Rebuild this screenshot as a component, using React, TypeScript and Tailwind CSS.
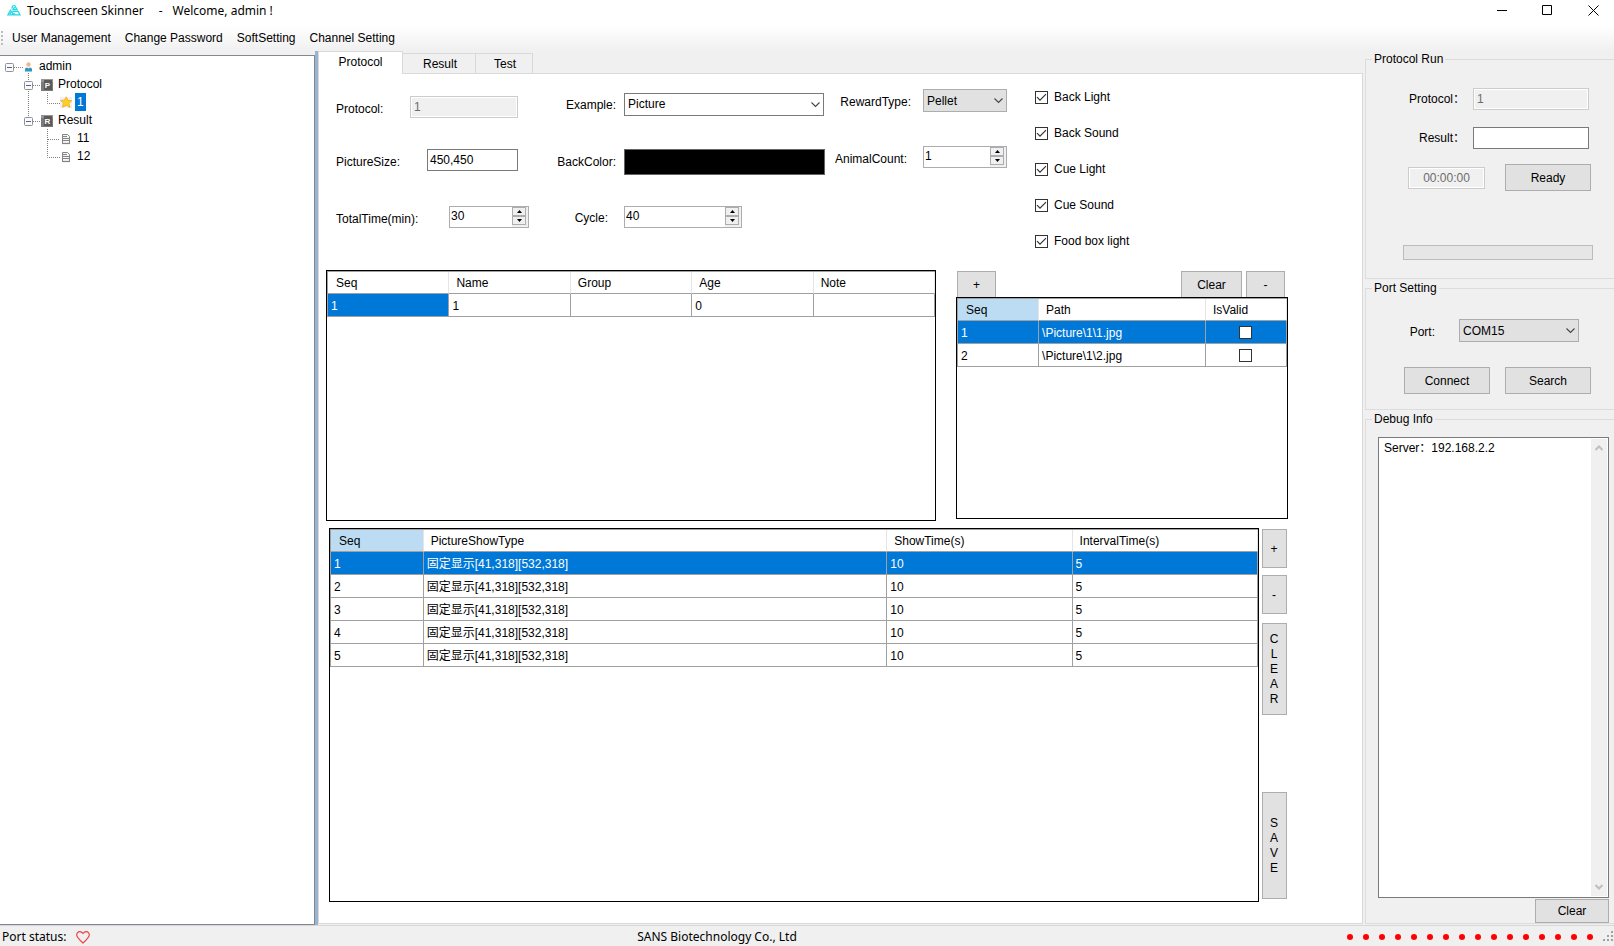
import React, { useState } from "react";
import type { ReactNode } from "react";

const button =
  "flex items-center justify-center border border-[#adadad] bg-[#e1e1e1] text-black hover:border-[#0078d7] hover:bg-[#e5f1fb]";
const disabledBox =
  "h-[22px] border border-[#cccccc] bg-[#f0f0f0] px-[3px] text-[#6d6d6d] shadow-[inset_0_0_0_1px_#ffffff]";
const textBox = "h-[22px] border border-[#7a7a7a] bg-white px-[2px]";

function Chevron() {
  return (
    <svg
      className="pointer-events-none absolute top-0 right-1 h-full w-[9px]"
      viewBox="0 0 9 5"
      fill="none"
      stroke="#444"
      strokeWidth="1.1"
    >
      <path d="M0.5 0.5 4.5 4.5 8.5 0.5" />
    </svg>
  );
}

function Combo({ id, value, tone, width }: { id: string; value: string; tone: "white" | "gray"; width: string }) {
  return (
    <div className={`relative h-[23px] ${width}`}>
      <select
        id={id}
        className={`h-full w-full appearance-none border pl-[3px] ${
          tone === "white" ? "border-[#7a7a7a] bg-white pb-[2px]" : "border-[#adadad] bg-[#e1e1e1]"
        }`}
      >
        <option>{value}</option>
      </select>
      <Chevron />
    </div>
  );
}

function Spinner({ id, initial, width }: { id: string; initial: number; width: string }) {
  const [value, setValue] = useState(initial);
  const step =
    "flex h-[9px] w-[14px] items-center justify-center border border-[#adadad] bg-[#f0f0f0]";
  return (
    <div className={`flex h-[22px] border border-[#abadb3] bg-white ${width}`}>
      <input
        id={id}
        type="number"
        value={value}
        onChange={(e) => setValue(Number(e.target.value))}
        className="min-w-0 flex-1 [appearance:textfield] bg-transparent pb-[2px] pl-px outline-none [&::-webkit-inner-spin-button]:appearance-none"
      />
      <div className="flex flex-col items-center bg-[#f0f0f0] pr-[2px]">
        <button type="button" aria-label="Increase" className={step} onClick={() => setValue(value + 1)}>
          <svg width="5" height="3" viewBox="0 0 5 3">
            <path d="M0 3 2.5 0 5 3Z" />
          </svg>
        </button>
        <button type="button" aria-label="Decrease" className={step} onClick={() => setValue(value - 1)}>
          <svg width="5" height="3" viewBox="0 0 5 3">
            <path d="M0 0 2.5 3 5 0Z" />
          </svg>
        </button>
      </div>
    </div>
  );
}

function Check({ label, initial }: { label: ReactNode; initial: boolean }) {
  const [on, setOn] = useState(initial);
  return (
    <label className="flex items-center gap-[6px] leading-4">
      <span className="grid">
        <input
          type="checkbox"
          checked={on}
          onChange={() => setOn(!on)}
          className="col-start-1 row-start-1 size-[13px] appearance-none border border-[#333] bg-white"
        />
        {on && (
          <svg
            className="pointer-events-none col-start-1 row-start-1"
            width="13"
            height="13"
            viewBox="0 0 13 13"
            fill="none"
            stroke="#333"
            strokeWidth="1.2"
          >
            <path d="M2 6.200 5 9.200 11 3.200" />
          </svg>
        )}
      </span>
      {label}
    </label>
  );
}

interface Column {
  title: string;
  width: string;
}

function DataGrid({
  columns,
  rows,
  selection,
  markFirst,
  className,
}: {
  columns: Column[];
  rows: ReactNode[][];
  selection: "cell" | "row";
  markFirst: boolean;
  className: string;
}) {
  return (
    <div className={`border border-black bg-white ${className}`}>
      <table className="w-full table-fixed border-separate border-spacing-0 border-t border-l border-[#a0a0a0]">
        <thead>
          <tr className="h-[22px]">
            {columns.map((c, i) => (
              <th
                key={c.title}
                className={`border-r border-b border-r-[#e5e5e5] border-b-[#a0a0a0] pt-px text-left leading-4 font-normal ${c.width} ${
                  i === 0 ? "pl-2" : "pl-[7px]"
                } ${markFirst && i === 0 ? "bg-[#bcdcf4]" : ""}`}
              >
                {c.title}
              </th>
            ))}
          </tr>
        </thead>
        <tbody>
          {rows.map((cells, r) => (
            <tr key={r} className="h-[23px]">
              {cells.map((cell, i) => (
                <td
                  key={i}
                  className={`border-r border-b border-[#a0a0a0] pt-[2px] pl-[3px] leading-4 whitespace-nowrap ${
                    r === 0 && (selection === "row" || i === 0) ? "bg-[#0078d7] text-white" : ""
                  }`}
                >
                  {cell}
                </td>
              ))}
            </tr>
          ))}
        </tbody>
      </table>
    </div>
  );
}

function Expander({ x }: { x: number }) {
  return (
    <g>
      <rect x={x + 0.5} y="6.5" width="8" height="8" rx="1" fill="#fafafa" stroke="#919191" />
      <path d={`M${x + 2} 10.5h5`} stroke="#4b63a7" />
    </g>
  );
}

const dots = { stroke: "#808080", strokeDasharray: "1 1" };

function LetterIcon({ letter }: { letter: string }) {
  return (
    <g>
      <rect x="41" y="4" width="12" height="12" fill="#7a7a7a" />
      <rect x="41" y="4" width="12" height="3" fill="#959595" />
      <rect x="44" y="5" width="8" height="10" fill="#5a5a5a" />
      <text x="47.5" y="13" fontSize="8" fontWeight="bold" textAnchor="middle" fill="#fff">
        {letter}
      </text>
    </g>
  );
}

function PageIcon() {
  return (
    <g fill="none" stroke="#858585">
      <path d="M62.500 5.500h5l2 2v7h-7z" fill="#f4f4f4" />
      <path d="M62 7.500h5M62 9.500h7M62 11.500h7" />
      <path d="M62 14.500h8" strokeWidth="1.200" />
    </g>
  );
}

function TreeRow({ width, text, selected, children }: { width: string; text: string; selected?: boolean; children: ReactNode }) {
  return (
    <li className="flex h-[18px] items-center">
      <svg className={`h-[18px] shrink-0 ${width}`}>{children}</svg>
      <span className={`px-[2px] leading-[18px] ${selected ? "bg-[#0078d7] text-white" : ""}`}>{text}</span>
    </li>
  );
}

function Tree() {
  return (
    <nav className="mt-1 w-[315px] shrink-0 border-t border-r border-b border-[#828790] bg-white pt-px">
      <ul>
        <TreeRow width="w-[37px]" text="admin">
          <path d="M14 10.500h9M28.500 16v2" {...dots} />
          <Expander x={5} />
          <circle cx="28.500" cy="7.500" r="2.200" fill="#efb98a" />
          <path d="M25 14.500v-2q0-2 2-2l1.500 1 1.500-1q2 0 2 2v2z" fill="#2f93c4" />
        </TreeRow>
        <TreeRow width="w-[56px]" text="Protocol">
          <path d="M28.500 0v18M33 10.500h8" {...dots} />
          <Expander x={24} />
          <LetterIcon letter="P" />
        </TreeRow>
        <TreeRow width="w-[75px]" text="1" selected>
          <path d="M28.500 0v18M47.500 0v10.500h13" fill="none" {...dots} />
          <rect x="60" y="4" width="12" height="11" fill="#f0f0f0" />
          <path
            d="m66.200 3.800 1.700 3.500 4 .4-3 2.700 1.200 4.100-3.700-2.100-3.900 1.900.9-4.200-2.900-2.700 4.100-.3z"
            fill="#ffcf1f"
            stroke="#eba62a"
            strokeWidth=".7"
          />
        </TreeRow>
        <TreeRow width="w-[56px]" text="Result">
          <path d="M28.500 0v8M33 10.500h8" {...dots} />
          <Expander x={24} />
          <LetterIcon letter="R" />
        </TreeRow>
        <TreeRow width="w-[75px]" text="11">
          <path d="M47.500 0v18M48 10.500h12" {...dots} />
          <PageIcon />
        </TreeRow>
        <TreeRow width="w-[75px]" text="12">
          <path d="M47.500 0v10.500h13" fill="none" {...dots} />
          <PageIcon />
        </TreeRow>
      </ul>
    </nav>
  );
}

function ProtocolForm() {
  return (
    <form className="flex pb-[21px] pl-[17px]" onSubmit={(e) => e.preventDefault()}>
      <div className="flex w-[193px] flex-col pt-[22px]">
        <div className="flex items-end justify-between pr-[11px]">
          <label htmlFor="protocol" className="leading-[18px]">Protocol:</label>
          <input id="protocol" disabled defaultValue="1" className={`w-[108px] ${disabledBox}`} />
        </div>
        <div className="mt-[31px] flex items-end justify-between pr-[11px]">
          <label htmlFor="size" className="leading-[18px]">PictureSize:</label>
          <input id="size" defaultValue="450,450" className={`w-[91px] ${textBox}`} />
        </div>
        <div className="mt-[35px] flex items-end justify-between">
          <label htmlFor="total" className="leading-[18px]">TotalTime(min):</label>
          <Spinner id="total" initial={30} width="w-[80px]" />
        </div>
      </div>

      <div className="ml-[27px] flex w-[269px] flex-col pt-[19px]">
        <div className="flex items-center gap-2">
          <label htmlFor="example" className="w-[60px] text-right leading-5">Example:</label>
          <Combo id="example" value="Picture" tone="white" width="w-[200px]" />
        </div>
        <div className="mt-[33px] flex items-center gap-2">
          <label htmlFor="color" className="w-[60px] text-right leading-5">BackColor:</label>
          <button id="color" type="button" aria-label="BackColor" className="h-[26px] w-[201px] border border-[#646464] bg-black" />
        </div>
        <div className="mt-[31px] flex items-end gap-2">
          <label htmlFor="cycle" className="w-[60px] pr-2 text-right leading-5">Cycle:</label>
          <Spinner id="cycle" initial={40} width="w-[118px]" />
        </div>
      </div>

      <div className="ml-2 flex flex-col pt-[15px]">
        <div className="flex items-end gap-3">
          <label htmlFor="reward" className="w-[78px] text-right leading-5">RewardType:</label>
          <Combo id="reward" value="Pellet" tone="gray" width="w-[84px]" />
        </div>
        <div className="mt-[34px] flex items-end gap-3">
          <label htmlFor="animals" className="w-[78px] pr-1 text-right leading-[18px]">AnimalCount:</label>
          <Spinner id="animals" initial={1} width="w-[84px]" />
        </div>
      </div>

      <div className="ml-7 flex flex-col gap-5 pt-[15px]">
        <Check label="Back Light" initial />
        <Check label="Back Sound" initial />
        <Check label="Cue Light" initial />
        <Check label="Cue Sound" initial />
        <Check label="Food box light" initial />
      </div>
    </form>
  );
}

function Stacked({ word }: { word: string }) {
  return (
    <span className="flex flex-col items-center leading-[15px]">
      {word.split("").map((c, i) => (
        <span key={i}>{c}</span>
      ))}
    </span>
  );
}

function ValidBox({ row }: { row: number }) {
  return (
    <span className="flex justify-center pr-1 pb-[2px]">
      <input
        type="checkbox"
        aria-label={`Row ${row} valid`}
        className="size-[13px] appearance-none border border-[#333] bg-white checked:bg-[#333]"
      />
    </span>
  );
}

const shows = ["1", "2", "3", "4", "5"].map((n) => [n, "固定显示[41,318][532,318]", "10", "5"]);

function ProtocolPage() {
  return (
    <div className="mb-px flex flex-1 flex-col border-r border-b border-l border-[#d9d9d9] bg-white">
      <ProtocolForm />
      <div className="flex h-[251px] gap-5 pr-[74px] pl-[7px]">
        <DataGrid
          className="min-w-0 flex-[610]"
          selection="cell"
          markFirst={false}
          columns={["Seq", "Name", "Group", "Age", "Note"].map((title) => ({ title, width: "w-1/5" }))}
          rows={[["1", "1", "", "0", ""]]}
        />
        <div className="flex min-w-0 flex-[333] flex-col pt-px pb-[2px]">
          <div className="flex h-[26px] gap-1 pr-[3px] pl-px">
            <button type="button" className={`w-[39px] border-b-0 ${button}`}>+</button>
            <button type="button" className={`ml-auto w-[61px] border-b-0 ${button}`}>Clear</button>
            <button type="button" className={`w-[39px] border-b-0 ${button}`}>-</button>
          </div>
          <DataGrid
            className="flex-1"
            selection="row"
            markFirst
            columns={[
              { title: "Seq", width: "w-[81px]" },
              { title: "Path", width: "" },
              { title: "IsValid", width: "w-[81px]" },
            ]}
            rows={[
              ["1", "\\Picture\\1\\1.jpg", <ValidBox row={1} />],
              ["2", "\\Picture\\1\\2.jpg", <ValidBox row={2} />],
            ]}
          />
        </div>
      </div>
      <div className="mt-[7px] mb-[21px] flex flex-1 gap-[3px] pr-[75px] pl-[10px]">
        <DataGrid
          className="min-w-0 flex-1"
          selection="row"
          markFirst
          columns={[
            { title: "Seq", width: "w-[10%]" },
            { title: "PictureShowType", width: "w-[50%]" },
            { title: "ShowTime(s)", width: "w-[20%]" },
            { title: "IntervalTime(s)", width: "w-[20%]" },
          ]}
          rows={shows}
        />
        <div className="flex w-[25px] flex-col pt-px pb-[3px]">
          <button type="button" className={`h-[39px] pr-px ${button}`}>+</button>
          <button type="button" className={`mt-[7px] h-[39px] pr-px ${button}`}>-</button>
          <button type="button" className={`mt-[9px] h-[92px] pr-px ${button}`} aria-label="CLEAR">
            <Stacked word="CLEAR" />
          </button>
          <button type="button" className={`mt-auto h-[107px] pr-px ${button}`} aria-label="SAVE">
            <Stacked word="SAVE" />
          </button>
        </div>
      </div>
    </div>
  );
}

function Group({ title, className, children }: { title: string; className: string; children: ReactNode }) {
  return (
    <fieldset className={`min-w-0 border-t border-b border-l border-[#dcdcdc] ${className}`}>
      <legend className="ml-[6px] px-[2px] leading-4">{title}</legend>
      {children}
    </fieldset>
  );
}

function SidePanel() {
  return (
    <aside className="flex w-[251px] shrink-0 flex-col pl-[2px]">
      <Group title="Protocol Run" className="h-[228px]">
        <div className="flex flex-col pt-[21px]">
          <div className="flex items-center justify-end gap-2 pr-[25px]">
            <label htmlFor="run-protocol">Protocol：</label>
            <input id="run-protocol" disabled defaultValue="1" className={`w-[116px] ${disabledBox}`} />
          </div>
          <div className="mt-[17px] flex items-center justify-end gap-2 pr-[25px]">
            <label htmlFor="run-result">Result：</label>
            <input id="run-result" className={`w-[116px] ${textBox}`} />
          </div>
          <div className="mt-[15px] flex items-center justify-end gap-5 pr-[23px]">
            <input aria-label="Elapsed" disabled defaultValue="00:00:00" className={`w-[77px] text-center ${disabledBox}`} />
            <button type="button" className={`h-[27px] w-[86px] ${button}`}>Ready</button>
          </div>
          <div role="progressbar" aria-label="Progress" className="mt-[54px] mr-[21px] ml-[37px] h-[15px] border border-[#bcbcbc] bg-[#e6e6e6]" />
        </div>
      </Group>
      <Group title="Port Setting" className="mt-px h-[130px]">
        <div className="flex items-end justify-end gap-6 pt-[23px] pr-[35px]">
          <label htmlFor="port" className="leading-5">Port:</label>
          <Combo id="port" value="COM15" tone="gray" width="w-[120px]" />
        </div>
        <div className="mt-[25px] flex justify-end gap-[15px] pr-[23px]">
          <button type="button" className={`h-[27px] w-[86px] ${button}`}>Connect</button>
          <button type="button" className={`h-[27px] w-[86px] ${button}`}>Search</button>
        </div>
      </Group>
      <Group title="Debug Info" className="mt-px mb-px flex flex-1 flex-col">
        <div className="mt-[10px] mr-[5px] ml-[12px] flex flex-1 border border-[#7a7a7a] bg-white p-px">
          <textarea
            aria-label="Debug Info"
            readOnly
            defaultValue="Server：192.168.2.2"
            className="min-w-0 flex-1 resize-none overflow-hidden pt-px pl-1 leading-4 outline-none"
          />
          <div className="flex w-4 flex-col items-center justify-between bg-[#f0f0f0] py-[6px]">
            <svg width="8" height="6" viewBox="0 0 8 6" fill="none" stroke="#bfbfbf" strokeWidth="2">
              <path d="M.5 5 4 1.500 7.500 5" />
            </svg>
            <svg width="8" height="6" viewBox="0 0 8 6" fill="none" stroke="#bfbfbf" strokeWidth="2">
              <path d="M.5 1 4 4.500 7.500 1" />
            </svg>
          </div>
        </div>
        <button type="button" className={`mt-px mr-[5px] ml-auto h-6 w-[74px] ${button}`}>Clear</button>
      </Group>
    </aside>
  );
}

function TitleBar() {
  return (
    <header className="flex h-[26px] items-center bg-white pl-[7px] [font-family:'Noto_Sans','Noto_Sans_CJK_SC',sans-serif]">
      <svg width="14" height="12" viewBox="0 0 14 12" fill="none" stroke="#22d8e6" strokeWidth="1.300" className="mb-[6px]">
        <path d="M6.500 1 4.500 4.500M7.500 1 10 5.500H6L7.500 3M3.800 5.500 1 10.800H6.500L4.500 7.500 3 10M5.500 7.300H11L13 10.800H8L6.800 9" />
      </svg>
      <h1 className="flex pb-[4px] pl-[6px] leading-4 whitespace-pre">
        <span>Touchscreen Skinner</span>
        <span className="pl-[15px]">-</span>
        <span className="pl-[10px]">Welcome, admin !</span>
      </h1>
      <div className="ml-auto flex h-full items-start gap-[35px] pt-[5px] pr-[15px]">
        <button type="button" aria-label="Minimize">
          <svg width="11" height="11" stroke="#000"><path d="M1 5.500h10" /></svg>
        </button>
        <button type="button" aria-label="Maximize">
          <svg width="11" height="11" stroke="#000" fill="none"><path d="M.5.5h9v9h-9z" /></svg>
        </button>
        <button type="button" aria-label="Close">
          <svg width="11" height="11" stroke="#000"><path d="m.5.500 10 10M10.500.500l-10 10" /></svg>
        </button>
      </div>
    </header>
  );
}

function StatusBar() {
  return (
    <footer className="grid h-[21px] grid-cols-[1fr_auto_1fr] items-center border-t border-[#d7d7d7] pt-[2px] pl-[2px] [font-family:'Noto_Sans','Noto_Sans_CJK_SC',sans-serif]">
      <div className="flex items-center gap-[10px]">
        <span>Port status:</span>
        <svg width="14" height="13" viewBox="0 0 14 13" fill="none" stroke="#f04040" strokeWidth="1.200">
          <path d="M7 2.500C5.800.8 4.600.7 3.800.7 2 .7.700 2 .700 4c0 2.300 2.800 4.800 6.300 8 3.500-3.200 6.300-5.700 6.300-8 0-2-1.300-3.300-3.100-3.300C9.400.7 8.200.8 7 2.500Z" />
        </svg>
      </div>
      <span className="pr-[182px]">SANS Biotechnology Co., Ltd</span>
      <div className="flex items-center justify-end gap-[10px]">
        <div className="flex gap-[10px]">
          {Array.from({ length: 16 }, (_, i) => (
            <span key={i} className="size-[6px] rounded-full bg-[#ff0000]" />
          ))}
        </div>
        <svg width="11" height="12" fill="#a0a0a0">
          <path d="M8 0h2v2h-2zM8 4h2v2h-2zM4 4h2v2h-2zM8 8h2v2h-2zM4 8h2v2h-2zM0 8h2v2h-2z" />
        </svg>
      </div>
    </footer>
  );
}

export default function App() {
  return (
    <div className="flex min-h-screen flex-col bg-[#f0f0f0] text-[12px] leading-4 text-black [font-family:'Liberation_Sans','Noto_Sans_CJK_SC',sans-serif]">
      <TitleBar />
      <nav className="flex h-[25px] items-center bg-linear-to-b from-white to-[#f0f0f0] pb-px">
        <span className="mr-[9px] ml-px h-[14px] w-[2px] border-r-2 border-dotted border-[#bdbdbd]" />
        <div className="flex gap-[14px]">
          {["User Management", "Change Password", "SoftSetting", "Channel Setting"].map((m) => (
            <button key={m} type="button">{m}</button>
          ))}
        </div>
      </nav>
      <div className="flex flex-1">
        <Tree />
        <div className="w-[3px] shrink-0 bg-[#99b4d1]" />
        <main className="flex min-w-0 flex-1 flex-col">
          <div role="tablist" className="flex h-[23px] items-end">
            <button type="button" role="tab" aria-selected="true" className="h-[23px] w-[85px] border-t border-r border-l border-[#d9d9d9] bg-white pb-[2px]">
              Protocol
            </button>
            <button type="button" role="tab" aria-selected="false" className="h-[21px] w-[73px] border-t border-r border-b border-[#d9d9d9] pl-[2px]">
              Result
            </button>
            <button type="button" role="tab" aria-selected="false" className="h-[21px] w-[57px] border-t border-r border-b border-[#d9d9d9] pl-[2px]">
              Test
            </button>
            <div className="flex-1 self-stretch border-b border-[#d9d9d9]" />
          </div>
          <ProtocolPage />
        </main>
        <SidePanel />
      </div>
      <StatusBar />
    </div>
  );
}
